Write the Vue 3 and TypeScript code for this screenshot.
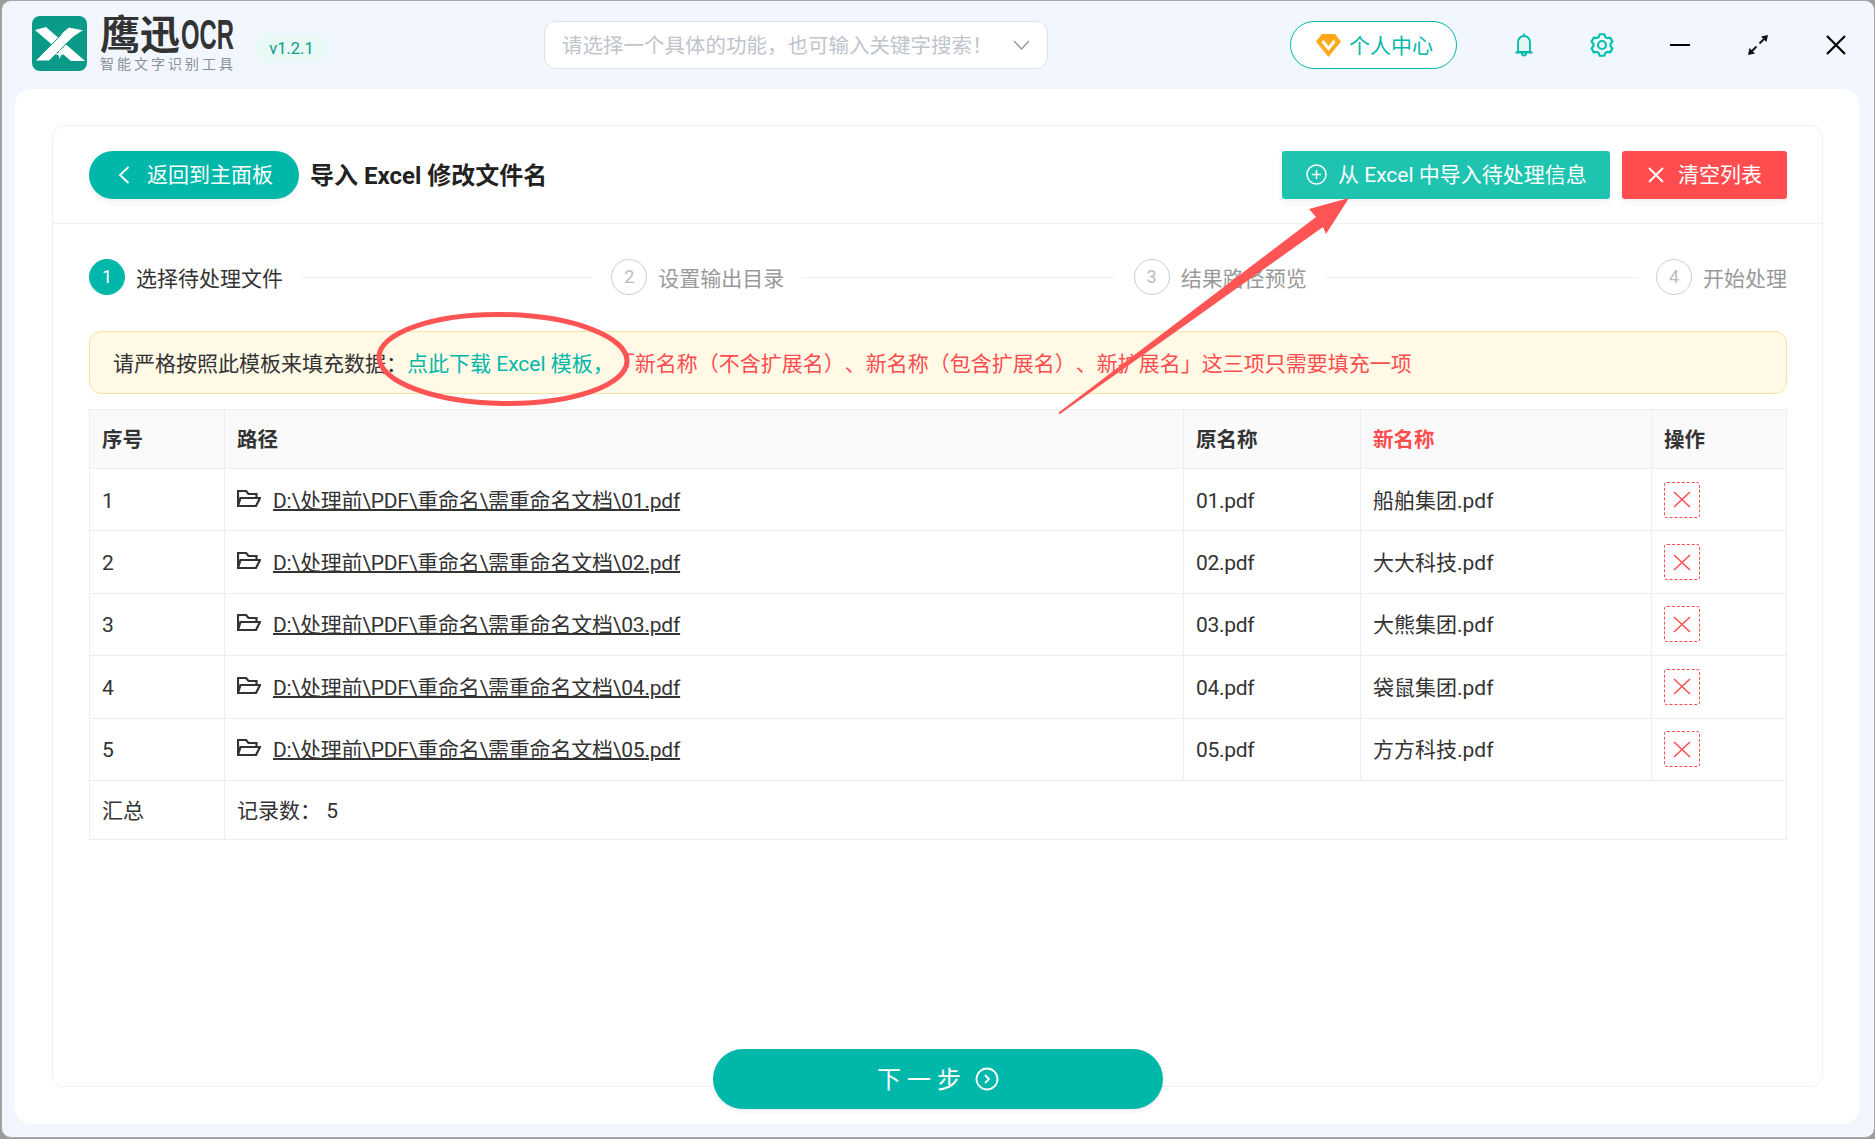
<script setup lang="ts">
interface Row {
  id: number;
  file: string;
  newName: string;
}

const steps = ["选择待处理文件", "设置输出目录", "结果路径预览", "开始处理"];

const rows: Row[] = [
  { id: 1, file: "01.pdf", newName: "船舶集团.pdf" },
  { id: 2, file: "02.pdf", newName: "大大科技.pdf" },
  { id: 3, file: "03.pdf", newName: "大熊集团.pdf" },
  { id: 4, file: "04.pdf", newName: "袋鼠集团.pdf" },
  { id: 5, file: "05.pdf", newName: "方方科技.pdf" },
];

const basePath = "D:\\处理前\\PDF\\重命名\\需重命名文档\\";

// six wide teeth, same proportions as the app's settings icon
function gearPath(): string {
  const pts: string[] = [];
  for (let i = 0; i < 6; i++) {
    const a = -90 + i * 60;
    for (const [off, r] of [[-23, 8.6], [-12, 11], [12, 11], [23, 8.6]]) {
      const rad = ((a + off) * Math.PI) / 180;
      pts.push(`${(12 + r * Math.cos(rad)).toFixed(2)} ${(12 + r * Math.sin(rad)).toFixed(2)}`);
    }
  }
  return `M${pts.join("L")}Z`;
}
</script>

<template>
  <div class="window">
    <header class="topbar">
      <div class="brand">
        <svg class="logo-mark" viewBox="0 0 55 55">
          <rect width="55" height="55" rx="8" fill="#0a9b88" />
          <path d="M3 14L14 11L53 45H39Z" fill="#fff" />
          <path d="M52 14L37 11Q31 15 27 21L3 45H17L33 29Q41 20 52 14Z" fill="#fff" stroke="#0a9b88" stroke-width="1" />
          <path d="M27.700 33l1.200 3.800L32.700 38l-3.800 1.200L27.700 43l-1.200-3.800L22.700 38l3.800-1.200Z" fill="#fff" />
        </svg>
        <div class="wordmark">
          <svg class="wordmark-name" viewBox="0 0 134 37">
            <text x="0" y="33" class="name-cn" textLength="80" lengthAdjust="spacingAndGlyphs">鹰迅</text>
            <text x="81" y="33" class="name-en" textLength="53" lengthAdjust="spacingAndGlyphs">OCR</text>
          </svg>
          <div class="tagline">智能文字识别工具</div>
        </div>
      </div>
      <span class="version">v1.2.1</span>
      <div class="search">
        <span class="search-text">请选择一个具体的功能，也可输入关键字搜索！</span>
        <svg class="search-arrow" viewBox="0 0 17 10">
          <path d="M1 1l7.500 8L16 1" />
        </svg>
      </div>
      <button class="profile">
        <svg class="gem" viewBox="0 0 25 24">
          <path d="M6 1h13l6 7.500L12.500 24 0 8.500Z" fill="#ffa81c" />
          <path d="M6.500 8l6 7.500 6-7.500" fill="none" stroke="#fff" stroke-width="3" />
        </svg>
        <span class="profile-text">个人中心</span>
      </button>
      <div class="win-actions">
        <span class="win-btn">
          <svg width="18" height="24" viewBox="0 0 18 24">
            <path d="M3 19V9a6 6 0 0 1 12 0v10Z" fill="#e0f7f3" stroke="#00b8a9" stroke-width="1.800" />
            <path d="M9 0.500v2.500M0.500 19.500h17M7 20.500a2 2 0 0 0 4 0" fill="none" stroke="#00b8a9" stroke-width="1.800" />
          </svg>
        </span>
        <span class="win-btn">
          <svg width="24" height="24" viewBox="0 0 24 24" fill="none" stroke="#00c2ae" stroke-width="2.200" stroke-linejoin="round">
            <path :d="gearPath()" />
            <circle cx="12" cy="12" r="4" />
          </svg>
        </span>
        <span class="win-btn">
          <svg width="20" height="20" viewBox="0 0 20 20"><path d="M0 10h20" stroke="#000" stroke-width="2" /></svg>
        </span>
        <span class="win-btn">
          <svg width="20" height="20" viewBox="0 0 20 20">
            <path d="M11.500 8.500L16 4M8.500 11.500L4 16" stroke="#111" stroke-width="2" />
            <path d="M20 0l-7 1.500 5.500 5.500ZM0 20l7-1.500L1.500 13Z" fill="#111" />
          </svg>
        </span>
        <span class="win-btn">
          <svg width="20" height="20" viewBox="0 0 20 20"><path d="M1 1l18 18M19 1L1 19" stroke="#000" stroke-width="2.200" /></svg>
        </span>
      </div>
    </header>

    <main class="sheet">
      <section class="card">
        <div class="card-head">
          <button class="back-btn">
            <svg width="12" height="18" viewBox="0 0 12 18"><path d="M10.500 1L2 9l8.500 8" fill="none" stroke="#fff" stroke-width="1.800" /></svg>
            返回到主面板
          </button>
          <h1 class="page-title">导入 Excel 修改文件名</h1>
          <button class="import-btn">
            <svg width="21" height="21" viewBox="0 0 21 21" fill="none" stroke="#fff" stroke-width="1.500">
              <circle cx="10.500" cy="10.500" r="9.500" />
              <path d="M10.500 6v9M6 10.500h9" />
            </svg>
            从 Excel 中导入待处理信息
          </button>
          <button class="clear-btn">
            <svg width="16" height="16" viewBox="0 0 16 16"><path d="M1 1l14 14M15 1L1 15" stroke="#fff" stroke-width="1.800" /></svg>
            清空列表
          </button>
        </div>

        <ol class="steps">
          <li v-for="(step, i) in steps" :key="step" class="step" :class="{ active: i === 0 }">
            <span class="step-num">{{ i + 1 }}</span>
            <span class="step-name">{{ step }}</span>
            <span v-if="i < steps.length - 1" class="step-line"></span>
          </li>
        </ol>

        <div class="notice">
          请严格按照此模板来填充数据：<a class="notice-link">点此下载 Excel 模板，</a><span class="notice-warn">「新名称（不含扩展名）、新名称（包含扩展名）、新扩展名」这三项只需要填充一项</span>
        </div>

        <table class="files">
          <colgroup>
            <col class="col-id" />
            <col class="col-path" />
            <col class="col-old" />
            <col class="col-new" />
            <col class="col-op" />
          </colgroup>
          <thead>
            <tr>
              <th>序号</th>
              <th>路径</th>
              <th>原名称</th>
              <th class="th-new">新名称</th>
              <th>操作</th>
            </tr>
          </thead>
          <tbody>
            <tr v-for="row in rows" :key="row.id">
              <td>{{ row.id }}</td>
              <td>
                <div class="path-cell">
                  <svg class="folder" viewBox="0 0 24 18" fill="none" stroke="#333" stroke-width="2.200">
                    <path d="M1 16V1H9L11.500 4H19.500V8M1 16L3.500 8H23L19 16Z" />
                  </svg>
                  <a class="path-link">{{ basePath + row.file }}</a>
                </div>
              </td>
              <td class="old-name">{{ row.file }}</td>
              <td>{{ row.newName }}</td>
              <td class="op-cell">
                <span class="del-btn">
                  <svg width="18" height="17" viewBox="0 0 18 17"><path d="M1 1l16 15M17 1L1 16" stroke="#ff4d4f" stroke-width="1.500" /></svg>
                </span>
              </td>
            </tr>
          </tbody>
          <tfoot>
            <tr>
              <td>汇总</td>
              <td colspan="4">记录数： 5</td>
            </tr>
          </tfoot>
        </table>

        <button class="next-btn">
          <span class="next-text">下一步</span>
          <svg width="24" height="24" viewBox="0 0 24 24" fill="none" stroke="#fff" stroke-width="1.800">
            <circle cx="12" cy="12" r="10.500" />
            <path d="M10 8l4 4-4 4" />
          </svg>
        </button>
      </section>
    </main>

    <!-- hand-drawn callouts on top of the screenshot -->
    <svg class="markup" viewBox="0 0 1875 1139">
      <ellipse cx="503" cy="359" rx="124" ry="44.500" fill="none" stroke="#ff5454" stroke-width="5" transform="rotate(1 503 359)" />
      <path d="M1058 413L1316 217L1309 209L1349 198L1326 234L1323 227L1060 414Z" fill="#ff5454" />
    </svg>
  </div>
</template>

<style>
html,
body {
  margin: 0;
  background: #9c9c9c;
}
</style>

<style scoped>
.window {
  position: relative;
  box-sizing: border-box;
  width: 1874px;
  height: 1138px;
  margin-left: 1px;
  display: flex;
  flex-direction: column;
  overflow: hidden;
  border: 1px solid #a8a8a8;
  border-radius: 10px;
  background: #f2f7ff;
  color: #333;
  font-family: Roboto, "Noto Sans CJK SC", sans-serif;
  font-size: 21px;
  line-height: 30px;
  text-spacing-trim: space-all;
}

.topbar {
  flex: 0 0 88px;
  display: flex;
  align-items: center;
  padding-left: 30px;
}

.topbar > * {
  flex: none;
}

.brand {
  display: flex;
  width: 201px;
  gap: 13px;
  margin-top: -2px;
}

.logo-mark {
  flex: 0 0 55px;
  width: 55px;
  height: 55px;
}

.wordmark {
  flex: 1;
}

.wordmark-name {
  display: block;
  width: 134px;
  height: 37px;
  overflow: visible;
}

.name-cn {
  font-family: "Noto Sans CJK SC", sans-serif;
  font-size: 40px;
  font-weight: 700;
  fill: #333;
}

.name-en {
  font-family: "Liberation Sans", sans-serif;
  font-size: 42px;
  font-weight: 700;
  fill: #333;
}

.tagline {
  margin-top: 3px;
  font-size: 14px;
  line-height: 16px;
  letter-spacing: 3px;
  white-space: nowrap;
  color: #8a8f98;
}

.version {
  margin: 6px 0 0 22px;
  width: 73px;
  height: 30px;
  line-height: 32px;
  text-align: center;
  border-radius: 15px;
  background: #e8f8f5;
  color: #0a9b88;
  font-size: 16.500px;
}

.search {
  box-sizing: border-box;
  margin-left: 216px;
  width: 504px;
  height: 48px;
  display: flex;
  align-items: center;
  justify-content: space-between;
  padding: 0 17px 0 17px;
  border: 1px solid #dcdfe6;
  border-radius: 12px;
  background: #fff;
}

.search-text {
  padding-top: 2px;
  color: #c0c4cc;
  font-size: 20.500px;
}

.search-arrow {
  width: 17px;
  height: 10px;
  fill: none;
  stroke: #999;
  stroke-width: 1.400;
}

.profile {
  box-sizing: border-box;
  margin-left: 242px;
  width: 167px;
  height: 48px;
  display: flex;
  align-items: center;
  gap: 8px;
  padding: 0 0 0 25px;
  border: 1px solid #00b8a9;
  border-radius: 24px;
  background: #fff;
  color: #00b8a9;
  font: inherit;
}

.profile-text {
  padding-top: 2px;
}

.gem {
  width: 25px;
  height: 24px;
}

.win-actions {
  margin-left: 28px;
  display: flex;
}

.win-btn {
  width: 78px;
  height: 48px;
  display: flex;
  flex: none;
  align-items: center;
  justify-content: center;
}

.sheet {
  flex: 1;
  display: flex;
  margin: 0 15px 13px 13px;
  padding: 36px 36px 37px 37px;
  border-radius: 16px;
  background: #fff;
}

.card {
  position: relative;
  flex: 1;
  border: 1px solid #f0f0f0;
  border-radius: 12px;
}

.card-head {
  box-sizing: border-box;
  height: 98px;
  display: flex;
  align-items: center;
  padding: 0 35px 0 36px;
  border-bottom: 1px solid #f0f0f0;
}

.card-head button {
  height: 48px;
  display: flex;
  align-items: center;
  border: 0;
  color: #fff;
  font: inherit;
  box-shadow: 0 3px 6px rgba(0, 0, 0, 0.06);
}

.back-btn {
  box-sizing: border-box;
  width: 210px;
  gap: 17px;
  padding: 0 0 0 29px;
  border-radius: 24px;
  background: #00b8a9;
}

.page-title {
  flex: 1;
  margin: 2px 0 0 11px;
  font-size: 24px;
  font-weight: 700;
  color: #222;
}

.import-btn {
  box-sizing: border-box;
  width: 328px;
  gap: 11px;
  padding: 0 0 0 24px;
  border-radius: 3px;
  background: #1ec4b0;
}

.clear-btn {
  box-sizing: border-box;
  width: 165px;
  gap: 14px;
  margin-left: 12px;
  padding: 0 0 0 26px;
  border-radius: 3px;
  background: #ff4d4f;
}

.steps {
  display: flex;
  margin: 35px 35px 0 36px;
  padding: 0;
  list-style: none;
}

.step {
  flex: 1 1 0;
  display: flex;
  align-items: center;
  height: 36px;
  color: #999;
}

.step:last-child {
  flex: 0 0 auto;
}

.step-num {
  box-sizing: border-box;
  flex: 0 0 36px;
  height: 36px;
  line-height: 34px;
  text-align: center;
  border: 1px solid #ccc;
  border-radius: 50%;
  color: #bbb;
  font-size: 18px;
}

.step-name {
  margin-left: 11px;
  padding-top: 3px;
  white-space: nowrap;
}

.step-line {
  flex: 1;
  height: 1px;
  margin: 0 19px;
  background: #eee;
}

.step.active {
  color: #333;
}

.step.active .step-num {
  border-color: #00b8a9;
  background: #00b8a9;
  color: #fff;
}

.notice {
  box-sizing: border-box;
  height: 63px;
  margin: 36px 35px 0 36px;
  padding: 0 23px;
  line-height: 64px;
  white-space: nowrap;
  border: 1px solid #fae3a0;
  border-radius: 12px;
  background: #fff9e6;
}

.notice-link {
  color: #00b8a9;
}

.notice-warn {
  color: #ff4d4f;
}

.files {
  box-sizing: border-box;
  width: 1698px;
  margin: 15px 0 0 36px;
  table-layout: fixed;
  border-collapse: collapse;
}

.col-id {
  width: 135px;
}

.col-path {
  width: 959px;
}

.col-old {
  width: 177px;
}

.col-new {
  width: 291px;
}

.files th,
.files td {
  box-sizing: border-box;
  padding: 2px 12px 0;
  border: 1px solid #eee;
  text-align: left;
  font-weight: 400;
}

.files th {
  height: 59px;
  background: #fafafa;
  font-weight: 700;
  font-size: 20.500px;
}

.files th.th-new {
  color: #ff4d4f;
}

.files tbody td {
  height: 62.400px;
}

.files tbody .old-name {
  letter-spacing: -0.3px;
}

.files tbody .op-cell {
  padding-top: 0;
}

.files tfoot td {
  height: 59px;
}

.path-cell {
  display: flex;
  align-items: center;
  gap: 12px;
}

.folder {
  width: 24px;
  height: 18px;
  margin-top: -4px;
}

.path-link {
  color: #333;
  letter-spacing: -0.2px;
  text-decoration: underline;
  text-decoration-thickness: 2px;
}

.del-btn {
  box-sizing: border-box;
  width: 36px;
  height: 36px;
  display: flex;
  align-items: center;
  justify-content: center;
  border: 1px dashed #ff4d4f;
  border-radius: 3px;
}

.next-btn {
  position: absolute;
  left: 660px;
  bottom: -23px;
  width: 450px;
  height: 60px;
  display: flex;
  align-items: center;
  justify-content: center;
  gap: 8px;
  border: 0;
  border-radius: 30px;
  background: #00b8a9;
  color: #fff;
  font: inherit;
  font-size: 24px;
  box-shadow: 0 2px 4px rgba(0, 0, 0, 0.08);
}

.next-text {
  padding-top: 2px;
  letter-spacing: 6px;
}

.markup {
  position: absolute;
  left: -2px;
  top: -1px;
  width: 1875px;
  height: 1139px;
  pointer-events: none;
}
</style>
